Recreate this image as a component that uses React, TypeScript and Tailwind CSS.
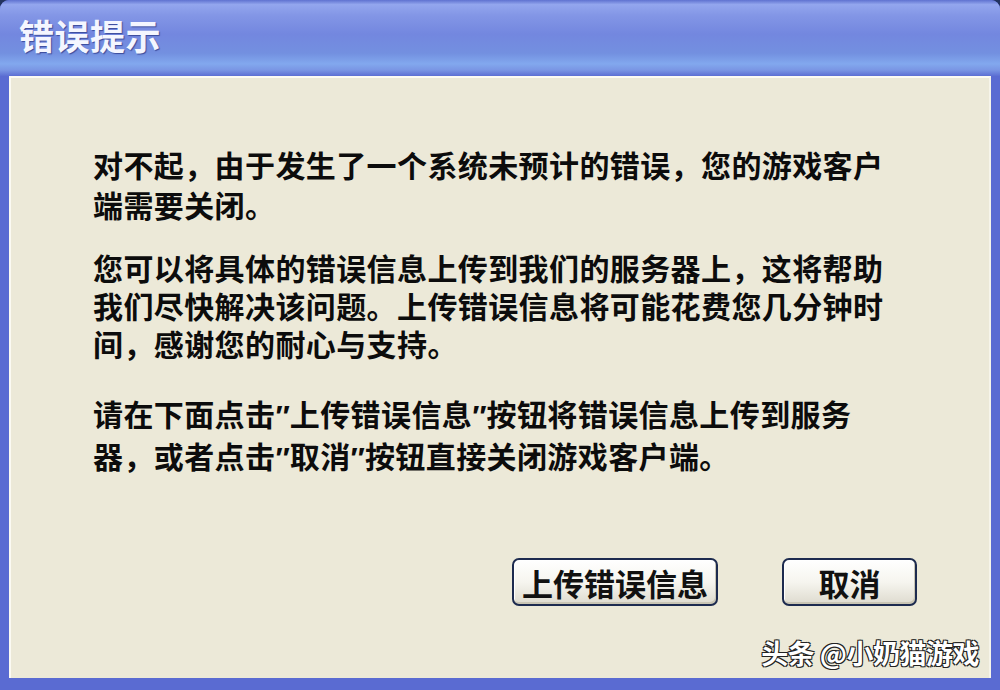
const CJK = "font-['Noto_Sans_CJK_SC','Noto_Sans',sans-serif]"

// half-width quote marks, as the old dialog font draws them
function Q({ c }: { c: string }) {
  return <span className="font-['Liberation_Sans',sans-serif] font-bold tracking-normal leading-[0]">{c}</span>
}

function XpButton({ label, width }: { label: string; width: string }) {
  return (
    <button
      className={`${width} h-[48px] rounded-[7px] border-2 border-[#1d2b4f] bg-gradient-to-b from-[#ffffff] via-[#f6f5ef] to-[#dedbcf] shadow-[inset_-1px_-2px_0_#c9c5b4,inset_1px_1px_0_#ffffff] flex items-center justify-center text-[31px] font-bold text-[#111] leading-none ${CJK}`}
    >
      {label}
    </button>
  )
}

export default function App() {
  return (
    <div className="w-[1000px] h-[690px] bg-[#23335f]">
      <div className="w-full h-full flex flex-col rounded-t-[9px] overflow-hidden bg-[#5a6bd2]">
        {/* title bar */}
        <div className="h-[76px] shrink-0 flex items-center pl-[19px] pb-[6px] bg-[linear-gradient(to_bottom,#5f72d0_0%,#93a6ee_6%,#8396e6_20%,#7387df_45%,#7390e0_70%,#82a8ee_84%,#7a96e4_92%,#5c6fd3_100%)]">
          <span
            className={`text-[35px] font-bold text-[#f4f6ff] tracking-[0.5px] [text-shadow:1px_1px_1px_#3a4a9a] ${CJK}`}
          >
            错误提示
          </span>
        </div>

        {/* client area */}
        <div className="flex-1 mx-[9px] mb-[12px] bg-[#ECE9D8] border-t-2 border-l-2 border-[#fbfaf3] border-r-2 border-r-[#f6f4ea] relative">
          <div
            className={`pl-[82px] pt-[66px] text-[30px] font-bold text-[#0c0c0c] tracking-[0.4px] whitespace-nowrap ${CJK}`}
          >
            <p className="leading-[40px]">
              对不起，由于发生了一个系统未预计的错误，您的游戏客户
              <br />
              端需要关闭。
            </p>
            <p className="leading-[38px] mt-[24px]">
              您可以将具体的错误信息上传到我们的服务器上，这将帮助
              <br />
              我们尽快解决该问题。上传错误信息将可能花费您几分钟时
              <br />
              间，感谢您的耐心与支持。
            </p>
            <p className="leading-[42px] mt-[30px]">
              请在下面点击<Q c="″" />上传错误信息<Q c="″" />按钮将错误信息上传到服务
              <br />
              器，或者点击<Q c="″" />取消<Q c="″" />按钮直接关闭游戏客户端。
            </p>
          </div>

          <div className="flex justify-end gap-[64px] pr-[72px] mt-[82px]">
            <XpButton label="上传错误信息" width="w-[206px]" />
            <XpButton label="取消" width="w-[135px]" />
          </div>

          {/* watermark */}
          <span
            className={`absolute right-[10px] bottom-[5px] text-[27px] font-bold text-white tracking-[-0.5px] [text-shadow:1px_1px_0_#222,-1px_-1px_0_#222,1px_-1px_0_#222,-1px_1px_0_#222] ${CJK}`}
          >
            头条 @小奶猫游戏
          </span>
        </div>
      </div>
    </div>
  )
}
